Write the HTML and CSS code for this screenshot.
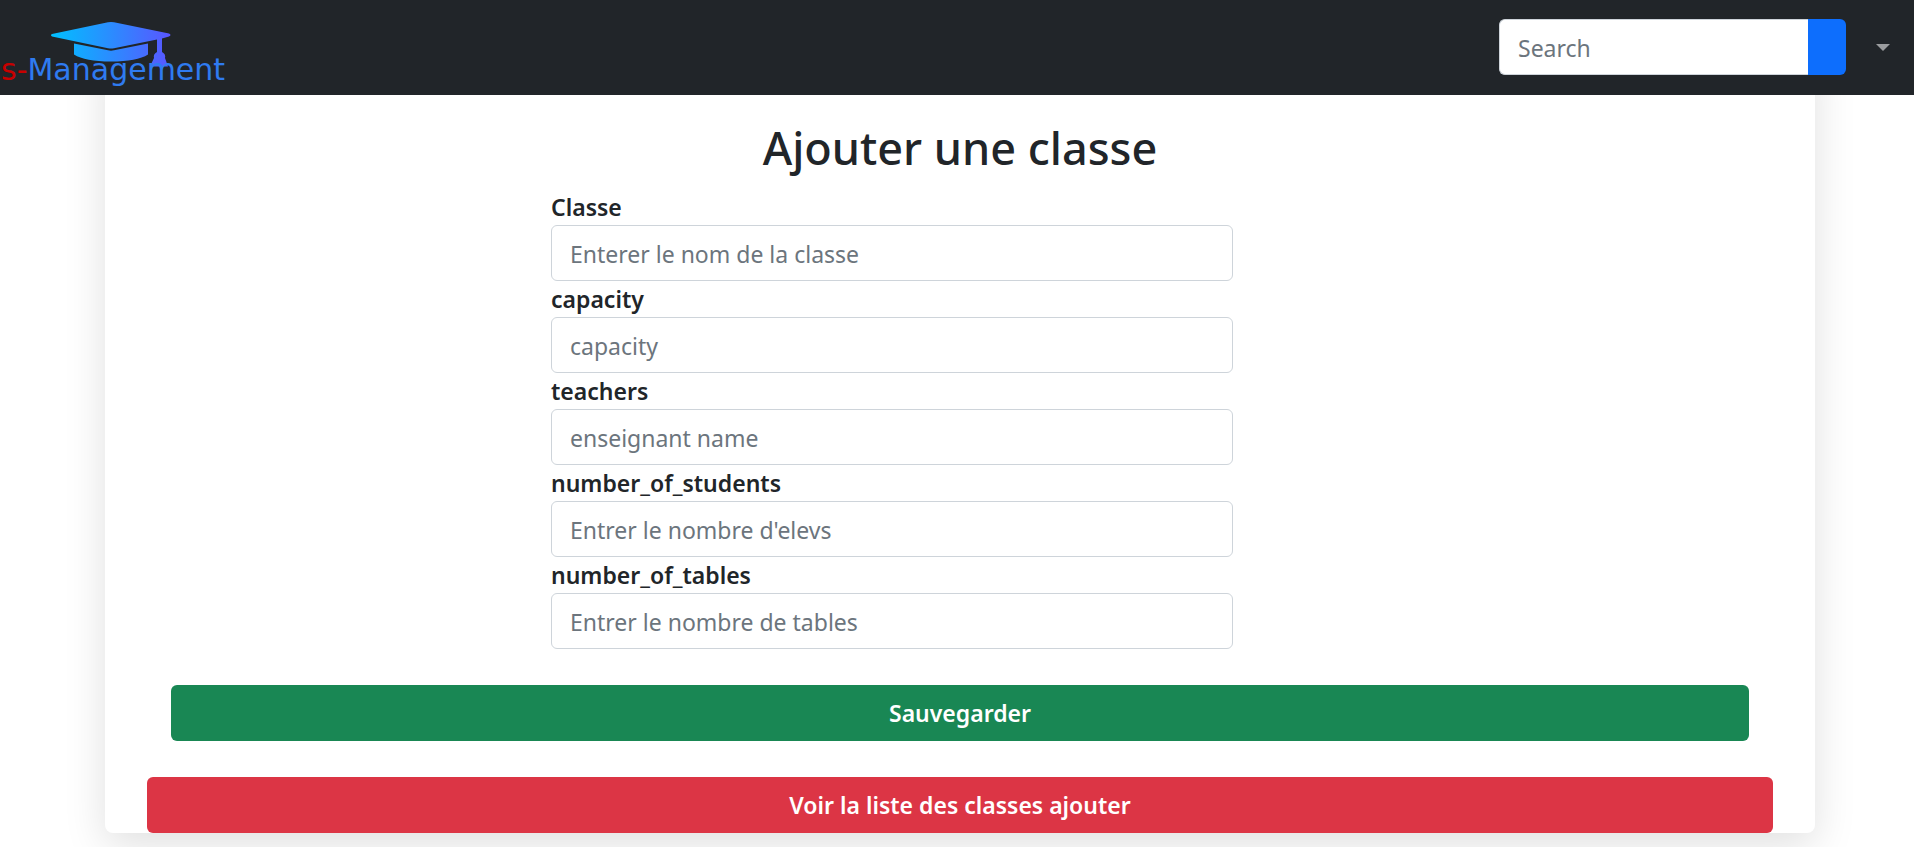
FILE: index.html
```html
<!DOCTYPE html>
<html lang="fr">
<head>
<meta charset="utf-8">
<meta name="viewport" content="width=device-width, initial-scale=1">
<title>Ajouter une classe</title>
<link rel="stylesheet" href="styles.css">
</head>
<body>
<header class="navbar">
  <a class="brand" href="#" aria-label="s-Management">
    <svg class="logo" viewBox="0 0 240 95" width="240" height="95">
      <defs>
        <linearGradient id="cap" gradientUnits="userSpaceOnUse" x1="51" y1="0" x2="171" y2="0">
          <stop offset="0" stop-color="#00c0ff"/>
          <stop offset="0.5" stop-color="#2b8cff"/>
          <stop offset="1" stop-color="#5a55ff"/>
        </linearGradient>
      </defs>
      <g fill="url(#cap)">
        <path d="M52 34 L108 22.300 Q111 21.700 114 22.300 L169 33.500 Q172 35 169 36.500 L162 38.500 V52 Q166 54 165 58 L168 66.500 H150 L154 58 Q153 54 157 52 V39.500 L114 48.200 Q111 49 108 48.200 L52 36.500 Q50 35 52 34 Z"/>
        <path d="M74 43.500 L108 50.300 Q111 51 114 50.300 L148 43.500 V54.500 Q137 61.500 111 61.500 Q85 61.500 74 54.500 Z"/>
      </g>
      <text class="logo-text" x="1" y="80"><tspan class="logo-initial">s-</tspan>Management</text>
    </svg>
  </a>
  <form class="search" role="search">
    <input class="field search-field" type="search" placeholder="Search" aria-label="Search">
    <button class="search-button" type="button" aria-label="Lancer la recherche"></button>
  </form>
  <button class="user-menu" type="button" aria-label="Menu utilisateur"><span class="caret"></span></button>
</header>
<main class="card">
  <h1 class="title">Ajouter une classe</h1>
  <form class="class-form">
    <div class="fields">
      <label class="label" for="classe">Classe</label>
      <input class="field" id="classe" type="text" placeholder="Enterer le nom de la classe">
      <label class="label" for="capacity">capacity</label>
      <input class="field" id="capacity" type="text" placeholder="capacity">
      <label class="label" for="teachers">teachers</label>
      <input class="field" id="teachers" type="text" placeholder="enseignant name">
      <label class="label" for="students">number_of_students</label>
      <input class="field" id="students" type="text" placeholder="Entrer le nombre d'elevs">
      <label class="label" for="tables">number_of_tables</label>
      <input class="field" id="tables" type="text" placeholder="Entrer le nombre de tables">
    </div>
    <button class="button save" type="button">Sauvegarder</button>
  </form>
  <a class="button list-link" href="#">Voir la liste des classes ajouter</a>
</main>
</body>
</html>
```
FILE: styles.css
```css
*,
*::before,
*::after {
  box-sizing: border-box;
}

body {
  min-height: 100vh;
  margin: 0;
  background: #fff;
  color: #212529;
  font-family: "Segoe UI", "Noto Sans", "Open Sans", sans-serif;
  font-size: 23px;
  line-height: 36px;
}

.navbar {
  position: relative;
  z-index: 1;
  display: flex;
  align-items: center;
  height: 95px;
  padding-bottom: 1px;
  background: #212529;
}

.brand,
.logo {
  display: block;
}

.logo-text {
  fill: #2f7bf0;
  font-family: "DejaVu Sans", sans-serif;
  font-size: 30px;
}

.logo-initial {
  fill: #c80000;
}

.search {
  display: flex;
  margin-left: auto;
}

.field {
  width: 100%;
  height: 56px;
  padding: 10px 18px 8px;
  border: 1px solid #ced4da;
  border-radius: 6px;
  background: #fff;
  color: #212529;
  font: inherit;
}

.field::placeholder {
  color: #6c757d;
  opacity: 1;
}

.search-field {
  width: 309px;
  border-right: 0;
  border-radius: 6px 0 0 6px;
  appearance: none;
}

.search-button {
  width: 38px;
  border: 0;
  border-radius: 0 6px 6px 0;
  background: #0d6efd;
}

.user-menu {
  display: flex;
  justify-content: flex-end;
  width: 68px;
  padding: 18px 24px;
  border: 0;
  background: none;
}

.caret {
  border: 7px solid transparent;
  border-top-color: #9b9d9f;
  border-bottom: 0;
}

.card {
  margin: -48px 99px 0 105px;
  padding-top: 72px;
  border-radius: 8px;
  background: #fff;
  box-shadow: 0 12px 42px rgba(0, 0, 0, 0.125);
}

.title {
  margin: 0 0 12px;
  font-size: 45px;
  font-weight: 500;
  line-height: 58px;
  text-align: center;
}

.class-form {
  display: grid;
  grid-template-columns: 380fr 682fr 516fr;
  row-gap: 36px;
  padding: 0 66px;
}

.fields {
  grid-column: 2;
}

.label {
  display: block;
  font-weight: 600;
}

.button {
  display: block;
  height: 56px;
  padding: 10px 18px;
  border: 0;
  border-radius: 6px;
  color: #fff;
  font: inherit;
  font-weight: 600;
  text-align: center;
  text-decoration: none;
}

.save {
  grid-column: 1 / -1;
  background: #198754;
}

.list-link {
  margin: 36px 42px 0;
  background: #dc3545;
}
```
